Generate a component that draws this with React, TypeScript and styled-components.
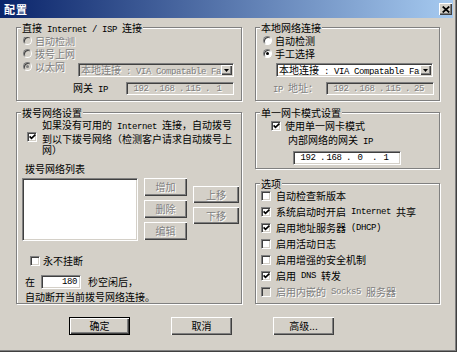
import React from "react";
import styled, { createGlobalStyle, css } from "styled-components";

const FACE = "#d4d0c8";

const GlobalStyle = createGlobalStyle`
  html, body { margin: 0; padding: 0; background: ${FACE}; }
  body {
    font-family: "Noto Sans CJK SC", "Noto Sans", sans-serif;
    font-size: 10px;
    line-height: 12px;
    color: #000;
  }
  *, *::before, *::after { box-sizing: border-box; }
`;

const sunken = css`
  border: 1px solid;
  border-color: #808080 #fff #fff #808080;
  box-shadow: inset 1px 1px 0 #404040, inset -1px -1px 0 ${FACE};
`;

const raised = css`
  box-shadow: inset 1px 1px 0 #fff, inset -1px -1px 0 #404040,
    inset -2px -2px 0 #808080;
`;

const greyText = css`
  color: #808080;
  text-shadow: 1px 1px 0 #fff;
`;

const L = styled.span`
  font-family: "Liberation Mono", "DejaVu Sans Mono", monospace;
  font-size: 9px;
  letter-spacing: -0.4px;
`;

const Window = styled.div`
  width: 457px;
  height: 352px;
  display: flex;
  flex-direction: column;
  background: ${FACE};
  padding: 0 4px 4px 0;
  box-shadow: inset -1px -1px 0 #404040, inset -2px -2px 0 #808080;
  overflow: hidden;
`;

const TitleBar = styled.div`
  height: 18px;
  flex: none;
  display: flex;
  align-items: center;
  padding: 0 1px 0 4px;
  background: linear-gradient(to right, #0a246a, #a6caf0);
`;

const Title = styled.span`
  color: #fff;
  font-weight: 700;
  font-size: 11px;
  letter-spacing: 1px;
`;

const CloseButton = styled.div`
  margin-left: auto;
  width: 13px;
  height: 12px;
  background: ${FACE};
  ${raised};
  display: flex;
  align-items: center;
  justify-content: center;
`;

const Body = styled.div`
  flex: 1;
  display: flex;
  flex-direction: column;
  padding: 9px 0 0 16px;
`;

const Columns = styled.div`
  display: grid;
  grid-template-columns: 226px 185px;
  column-gap: 13px;
  height: 277px;
`;

const Column = styled.div`
  display: flex;
  flex-direction: column;
`;

const Group = styled.div<{ $h?: number; $mt?: number; $pad: string }>`
  position: relative;
  border: 1px solid #808080;
  box-shadow: 1px 1px 0 #fff, inset 1px 1px 0 #fff;
  margin-top: ${(p) => p.$mt ?? 0}px;
  ${(p) => (p.$h ? `height: ${p.$h}px; flex: none;` : `flex: 1;`)}
  display: flex;
  flex-direction: column;
  align-items: flex-start;
  padding: ${(p) => p.$pad};
`;

const GroupLabel = styled.span`
  position: absolute;
  top: -7px;
  left: 4px;
  padding: 0 1px;
  background: ${FACE};
  line-height: 13px;
  white-space: nowrap;
`;

const RadioRow = styled.label<{ $disabled?: boolean }>`
  display: flex;
  align-items: center;
  gap: 3px;
  height: 13px;
  white-space: nowrap;
  ${(p) => p.$disabled && greyText};
`;

const RadioDot = styled.span<{ $checked?: boolean; $disabled?: boolean }>`
  width: 9px;
  height: 9px;
  flex: none;
  border-radius: 50%;
  border: 1px solid;
  border-color: #808080 #fff #fff #808080;
  box-shadow: inset 1px 1px 0 #404040;
  background: ${(p) => (p.$disabled ? FACE : "#fff")};
  display: flex;
  align-items: center;
  justify-content: center;
  &::after {
    content: "";
    width: 3px;
    height: 3px;
    border-radius: 50%;
    background: ${(p) =>
      p.$checked ? (p.$disabled ? "#808080" : "#000") : "transparent"};
  }
`;

const CheckBox = styled.span<{ $disabled?: boolean; $mt?: number }>`
  width: 10px;
  height: 10px;
  flex: none;
  margin-top: ${(p) => p.$mt ?? 0}px;
  ${sunken};
  background: ${(p) => (p.$disabled ? FACE : "#fff")};
  display: flex;
  align-items: center;
  justify-content: center;
`;

function Check({
  checked,
  disabled,
  mt,
}: {
  checked?: boolean;
  disabled?: boolean;
  mt?: number;
}) {
  return (
    <CheckBox $disabled={disabled} $mt={mt}>
      {checked && (
        <svg width="7" height="6" viewBox="0 0 7 6">
          <path
            d="M0.6 2.4 L2.5 4.4 L6.4 0.6"
            stroke="#000"
            strokeWidth="1.6"
            fill="none"
          />
        </svg>
      )}
    </CheckBox>
  );
}

const CheckRow = styled.label<{
  $disabled?: boolean;
  $ml?: number;
  $mt?: number;
  $gap?: number;
}>`
  display: flex;
  align-items: center;
  gap: ${(p) => p.$gap ?? 4}px;
  height: 12px;
  margin-left: ${(p) => p.$ml ?? 0}px;
  margin-top: ${(p) => p.$mt ?? 0}px;
  white-space: nowrap;
  ${(p) => p.$disabled && greyText};
`;

const SelectRow = styled.div`
  display: flex;
  align-items: flex-start;
  align-self: stretch;
`;

const Select = styled.div<{ $w: number; $ml?: number; $disabled?: boolean }>`
  width: ${(p) => p.$w}px;
  height: 14px;
  margin-top: 3px;
  margin-left: ${(p) => (p.$ml === undefined ? "auto" : `${p.$ml}px`)};
  ${sunken};
  padding: 1px;
  display: flex;
  background: ${(p) => (p.$disabled ? FACE : "#fff")};
  ${(p) => p.$disabled && greyText};
`;

const SelectText = styled.span`
  flex: 1;
  overflow: hidden;
  white-space: nowrap;
  line-height: 10px;
  padding-left: 1px;
`;

const SelectArrow = styled.span`
  width: 11px;
  flex: none;
  background: ${FACE};
  ${raised};
  display: flex;
  align-items: center;
  justify-content: center;
`;

const FieldRow = styled.div<{ $ml: number }>`
  display: flex;
  align-items: center;
  align-self: stretch;
  height: 13px;
  margin-top: 5px;
  margin-left: ${(p) => p.$ml}px;
`;

const FieldLabel = styled.span<{ $disabled?: boolean }>`
  white-space: nowrap;
  ${(p) => p.$disabled && greyText};
`;

const IpBox = styled.div<{
  $disabled?: boolean;
  $h: number;
  $ml?: number;
  $mt?: number;
}>`
  width: 108px;
  height: ${(p) => p.$h}px;
  margin-left: ${(p) => (p.$ml === undefined ? "auto" : `${p.$ml}px`)};
  margin-top: ${(p) => p.$mt ?? 0}px;
  ${sunken};
  padding: 0 2px;
  display: flex;
  align-items: center;
  background: ${(p) => (p.$disabled ? FACE : "#fff")};
  ${(p) => p.$disabled && greyText};
  font-family: "Liberation Mono", "DejaVu Sans Mono", monospace;
  font-size: 9px;
  letter-spacing: -0.4px;
`;

const Octet = styled.span`
  flex: 1;
  text-align: center;
`;

const Dot = styled.span`
  width: 2px;
  text-align: center;
`;

function IpField({
  parts,
  disabled,
  h,
  ml,
  mt,
}: {
  parts: string[];
  disabled?: boolean;
  h: number;
  ml?: number;
  mt?: number;
}) {
  return (
    <IpBox $disabled={disabled} $h={h} $ml={ml} $mt={mt}>
      {parts.map((p, i) => (
        <React.Fragment key={i}>
          {i > 0 && <Dot>.</Dot>}
          <Octet>{p}</Octet>
        </React.Fragment>
      ))}
    </IpBox>
  );
}

const DialNote = styled.label`
  display: flex;
  align-items: flex-start;
  gap: 5px;
  margin: -1px 0 0 5px;
`;

const NoteText = styled.span`
  line-height: 11px;
  white-space: nowrap;
`;

const TextLine = styled.span<{ $mt: number; $ml?: number }>`
  margin-top: ${(p) => p.$mt}px;
  margin-left: ${(p) => p.$ml ?? 3}px;
  line-height: 12px;
  white-space: nowrap;
`;

const ListArea = styled.div`
  display: flex;
  align-items: flex-start;
  gap: 6px;
  margin-top: 3px;
`;

const ListBox = styled.div`
  width: 116px;
  height: 63px;
  ${sunken};
  background: #fff;
`;

const ButtonCol = styled.div<{ $mt?: number }>`
  display: flex;
  flex-direction: column;
  gap: 4px;
  margin-top: ${(p) => p.$mt ?? 0}px;
`;

const SmallButton = styled.div<{ $w: number; $h: number }>`
  width: ${(p) => p.$w}px;
  height: ${(p) => p.$h}px;
  background: ${FACE};
  ${raised};
  display: flex;
  align-items: center;
  justify-content: center;
  ${greyText};
`;

const IdleRow = styled.div`
  display: flex;
  align-items: center;
  height: 14px;
  margin-top: 8px;
  margin-left: 3px;
  white-space: nowrap;
`;

const NumberInput = styled.div`
  width: 40px;
  height: 14px;
  margin: 0 7px 0 6px;
  ${sunken};
  background: #fff;
  text-align: right;
  padding-right: 3px;
  line-height: 12px;
  font-family: "Liberation Mono", "DejaVu Sans Mono", monospace;
  font-size: 9px;
  letter-spacing: -0.4px;
`;

const OptionList = styled.div`
  display: flex;
  flex-direction: column;
  gap: 4px;
`;

const ButtonBar = styled.div`
  display: flex;
  gap: 41px;
  margin-top: 13px;
  padding-left: 53px;
`;

const DialogButton = styled.div<{ $default?: boolean }>`
  width: 61px;
  height: 18px;
  background: ${FACE};
  display: flex;
  align-items: center;
  justify-content: center;
  ${(p) =>
    p.$default
      ? css`
          border: 1px solid #000;
          box-shadow: inset 1px 1px 0 #fff, inset -1px -1px 0 #404040,
            inset -2px -2px 0 #808080;
        `
      : raised};
`;

const Arrow = () => (
  <svg width="5" height="3" viewBox="0 0 5 3">
    <path d="M0 0 H5 L2.5 3 Z" fill="#000" />
  </svg>
);

export default function App() {
  return (
    <>
      <GlobalStyle />
      <Window>
        <TitleBar>
          <Title>配置</Title>
          <CloseButton>
            <svg width="8" height="7" viewBox="0 0 8 7">
              <path
                d="M0.7 0.5 L7.3 6.5 M7.3 0.5 L0.7 6.5"
                stroke="#000"
                strokeWidth="1.7"
              />
            </svg>
          </CloseButton>
        </TitleBar>
        <Body>
          <Columns>
            <Column>
              <Group $h={74} $pad="6px 7px 0 6px">
                <GroupLabel>
                  直接<L> Internet / ISP </L>连接
                </GroupLabel>
                <RadioRow $disabled>
                  <RadioDot $disabled />
                  自动检测
                </RadioRow>
                <RadioRow $disabled>
                  <RadioDot $disabled />
                  拨号上网
                </RadioRow>
                <SelectRow>
                  <RadioRow $disabled>
                    <RadioDot $disabled $checked />
                    以太网
                  </RadioRow>
                  <Select $w={156} $disabled>
                    <SelectText>
                      本地连接<L> : VIA Compatable Fast Ethernet</L>
                    </SelectText>
                    <SelectArrow>
                      <Arrow />
                    </SelectArrow>
                  </Select>
                </SelectRow>
                <FieldRow $ml={50}>
                  <FieldLabel>
                    网关<L> IP</L>
                  </FieldLabel>
                  <IpField parts={["192", "168", "115", "1"]} disabled h={13} />
                </FieldRow>
              </Group>
              <Group $mt={11} $pad="7px 0 0 5px">
                <GroupLabel>拨号网络设置</GroupLabel>
                <DialNote>
                  <Check checked mt={13} />
                  <NoteText>
                    如果没有可用的<L> Internet </L>连接，自动拨号
                    <br />
                    到以下拨号网络（检测客户请求自动拨号上
                    <br />
                    网）
                  </NoteText>
                </DialNote>
                <TextLine $mt={8}>拨号网络列表</TextLine>
                <ListArea>
                  <ListBox />
                  <ButtonCol>
                    <SmallButton $w={43} $h={18}>增加</SmallButton>
                    <SmallButton $w={43} $h={18}>删除</SmallButton>
                    <SmallButton $w={43} $h={18}>编辑</SmallButton>
                  </ButtonCol>
                  <ButtonCol $mt={8}>
                    <SmallButton $w={46} $h={17}>上移</SmallButton>
                    <SmallButton $w={46} $h={17}>下移</SmallButton>
                  </ButtonCol>
                </ListArea>
                <CheckRow $ml={8} $mt={14} $gap={3}>
                  <Check />
                  永不挂断
                </CheckRow>
                <IdleRow>
                  在<NumberInput>180</NumberInput>秒空闲后，
                </IdleRow>
                <TextLine $mt={2}>自动断开当前拨号网络连接。</TextLine>
              </Group>
            </Column>
            <Column>
              <Group $h={74} $pad="6px 5px 0 7px">
                <GroupLabel>本地网络连接</GroupLabel>
                <RadioRow>
                  <RadioDot />
                  自动检测
                </RadioRow>
                <RadioRow>
                  <RadioDot $checked />
                  手工选择
                </RadioRow>
                <Select $w={157} $ml={13}>
                  <SelectText>
                    本地连接<L> : VIA Compatable Fast Ethernet</L>
                  </SelectText>
                  <SelectArrow>
                    <Arrow />
                  </SelectArrow>
                </Select>
                <FieldRow $ml={10}>
                  <FieldLabel $disabled>
                    <L>IP </L>地址：
                  </FieldLabel>
                  <IpField parts={["192", "168", "115", "25"]} disabled h={13} />
                </FieldRow>
              </Group>
              <Group $h={57} $mt={11} $pad="7px 0 0 15px">
                <GroupLabel>单一网卡模式设置</GroupLabel>
                <CheckRow>
                  <Check checked />
                  使用单一网卡模式
                </CheckRow>
                <TextLine $mt={2} $ml={17}>
                  内部网络的网关<L> IP</L>
                </TextLine>
                <IpField parts={["192", "168", "0", "1"]} h={14} ml={22} mt={3} />
              </Group>
              <Group $mt={14} $pad="6px 0 0 5px">
                <GroupLabel>选项</GroupLabel>
                <OptionList>
                  <CheckRow $gap={5}>
                    <Check />
                    自动检查新版本
                  </CheckRow>
                  <CheckRow $gap={5}>
                    <Check checked />
                    系统启动时开启<L> Internet </L>共享
                  </CheckRow>
                  <CheckRow $gap={5}>
                    <Check checked />
                    启用地址服务器<L> (DHCP)</L>
                  </CheckRow>
                  <CheckRow $gap={5}>
                    <Check />
                    启用活动日志
                  </CheckRow>
                  <CheckRow $gap={5}>
                    <Check />
                    启用增强的安全机制
                  </CheckRow>
                  <CheckRow $gap={5}>
                    <Check checked />
                    启用<L> DNS </L>转发
                  </CheckRow>
                  <CheckRow $gap={5} $disabled>
                    <Check disabled />
                    启用内嵌的<L> Socks5 </L>服务器
                  </CheckRow>
                </OptionList>
              </Group>
            </Column>
          </Columns>
          <ButtonBar>
            <DialogButton $default>确定</DialogButton>
            <DialogButton>取消</DialogButton>
            <DialogButton>高级...</DialogButton>
          </ButtonBar>
        </Body>
      </Window>
    </>
  );
}
